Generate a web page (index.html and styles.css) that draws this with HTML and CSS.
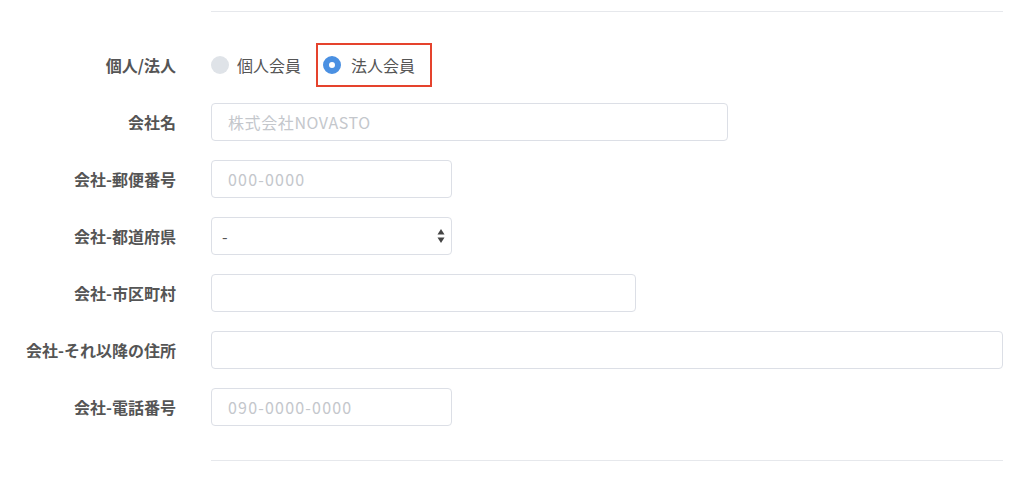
FILE: index.html
```html
<!DOCTYPE html>
<html lang="ja">
  <head>
    <meta charset="UTF-8" />
    <meta name="viewport" content="width=device-width, initial-scale=1.0" />
    <title>会社情報</title>
    <link rel="stylesheet" href="styles.css">
  </head>
  <body>
    <form class="member-form">
      <div class="rule"></div>

      <div class="row">
        <label class="row-label">個人/法人</label>
        <div class="radios">
          <label class="radio">
            <span class="dot"></span>
            個人会員
          </label>
          <label class="radio radio-marked">
            <span class="dot dot-on"></span>
            法人会員
          </label>
        </div>
      </div>

      <div class="row">
        <label class="row-label" for="company">会社名</label>
        <input class="field w-517" type="text" id="company" placeholder="株式会社NOVASTO" />
      </div>

      <div class="row">
        <label class="row-label" for="zip">会社-郵便番号</label>
        <input class="field num w-241" type="text" id="zip" placeholder="000-0000" />
      </div>

      <div class="row">
        <label class="row-label" for="pref">会社-都道府県</label>
        <div class="select-wrap w-241">
          <select class="field select" id="pref">
            <option>-</option>
          </select>
          <svg class="arrows" width="8" height="16" viewBox="0 0 8 16">
            <path d="M4 1 L7.5 6.5 L0.5 6.5 Z" fill="#444" />
            <path d="M4 15 L7.5 9.5 L0.5 9.5 Z" fill="#444" />
          </svg>
        </div>
      </div>

      <div class="row">
        <label class="row-label" for="city">会社-市区町村</label>
        <input class="field w-425" type="text" id="city" />
      </div>

      <div class="row">
        <label class="row-label" for="address">会社-それ以降の住所</label>
        <input class="field w-full" type="text" id="address" />
      </div>

      <div class="row">
        <label class="row-label" for="tel">会社-電話番号</label>
        <input class="field num w-241" type="text" id="tel" placeholder="090-0000-0000" />
      </div>

      <div class="rule rule-bottom"></div>
    </form>
  </body>
</html>
```

FILE: styles.css
```css
body {
  margin: 0;
  background: #fff;
  font-family: "Noto Sans CJK JP", "Noto Sans", sans-serif;
  color: #555;
}

.member-form {
  width: 1003px;
  padding-top: 11px;
}

.rule {
  margin-left: 211px;
  height: 1px;
  background: #e6e8ec;
  margin-bottom: 34px;
}

.rule-bottom {
  margin-top: 34px;
  margin-bottom: 0;
}

.row {
  display: flex;
  align-items: center;
  height: 38px;
  margin-bottom: 19px;
}

.row:nth-last-child(2) {
  margin-bottom: 0;
}

.row-label {
  width: 176px;
  margin-right: 35px;
  text-align: right;
  font-size: 16px;
  font-weight: 700;
  color: #555;
  flex-shrink: 0;
}

.radios {
  display: flex;
  align-items: center;
  gap: 15px;
}

.radio {
  display: flex;
  align-items: center;
  gap: 8px;
  font-size: 16px;
  color: #555;
  height: 44px;
  box-sizing: border-box;
}

.radio-marked {
  border: 2px solid #e5432d;
  padding: 0 15px 0 5px;
  gap: 10px;
}

.dot {
  width: 18px;
  height: 18px;
  border-radius: 50%;
  background: #dfe3e8;
  box-sizing: border-box;
}

.dot-on {
  background: #fff;
  border: 6px solid #4a90e2;
}

.field {
  height: 38px;
  box-sizing: border-box;
  border: 1px solid #dcdfe6;
  border-radius: 4px;
  padding: 0 16px;
  font-family: "Noto Sans CJK JP", "Noto Sans", sans-serif;
  font-size: 16px;
  color: #555;
  background: #fff;
  outline: none;
}

.field::placeholder {
  color: #c4c7cc;
  letter-spacing: 0.6px;
}

.num::placeholder {
  letter-spacing: 1.2px;
}

.w-241 { width: 241px; }
.w-425 { width: 425px; }
.w-517 { width: 517px; }
.w-full { width: 792px; }

.select-wrap {
  position: relative;
  height: 38px;
}

.select {
  width: 100%;
  appearance: none;
  -webkit-appearance: none;
  padding-left: 10px;
}

.arrows {
  position: absolute;
  right: 7px;
  top: 11px;
}
```
